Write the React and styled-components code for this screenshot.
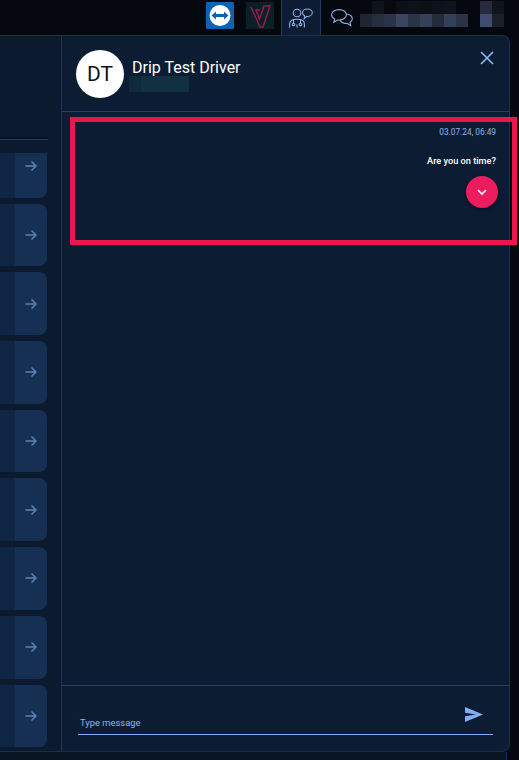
import React from "react";
import styled, { createGlobalStyle } from "styled-components";

const ROW_COUNT = 9;
const NAME_TOP = ["#05080f", "#0f131b", "#07090f", "#0c0f16", "#0e1119", "#0c0f16", "#0e1119", "#10141c", "#05080f"];
const NAME_BOTTOM = ["#1f2532", "#262e3d", "#2b3446", "#3a4660", "#2b3446", "#344059", "#242b3a", "#34405a", "#2b3344"];
const USER_CELLS = ["#252b3a", "#10141c", "#3f4e6e", "#1b1f2a"];

function TeamViewerLogo () {
    return (
        <svg width="28" height="27" viewBox="0 0 28 27">
            <rect width="28" height="27" rx="1" fill="#0e62b4"/>
            <circle cx="14" cy="13.5" r="10.5" fill="#fff"/>
            <path d="M5.5 13.5 10 9.6v2.500h8V9.600l4.500 3.900-4.500 3.900v-2.500h-8v2.500z" fill="#0e62b4"/>
        </svg>
    );
};

function VLogo () {
    return (
        <svg width="28" height="27" viewBox="0 0 28 27">
            <rect width="28" height="27" fill="#0b1f27"/>
            <path d="M5 5 14 25h3L24 4h-6l-4.500 13L10 8h4" fill="none" stroke="#a01a4a" strokeWidth="1.400"/>
        </svg>
    );
};

function TeamIcon () {
    return (
        <svg width="24" height="20" viewBox="0 0 24 20" fill="none" stroke="#8fb2e8" strokeWidth="1.100">
            <circle cx="8" cy="5" r="3.800"/>
            <path d="M.6 19.500v-3.500c0-3 3-4.800 7.400-4.800s7.400 1.800 7.400 4.800v3.500"/>
            <path d="M4.500 11.700v3.300M11.500 11.700v3.300M8 19.500v-3"/>
            <circle cx="4.500" cy="16.500" r="1.300"/>
            <circle cx="11.500" cy="16.500" r="1.300"/>
            <path d="M18.300 1c2.700 0 5 1.600 5 3.700s-2.300 3.800-5 3.800h-.8l-2.300 2 .4-2.700c-1.300-.7-2.100-1.800-2.100-3.100 0-2.100 2.200-3.700 4.800-3.700z"/>
        </svg>
    );
};

function ChatIcon () {
    return (
        <svg width="22" height="18" viewBox="0 0 22 18" fill="none" stroke="#8fb2e8" strokeWidth="1.100">
            <path d="M8 .6c4 0 7.400 2.200 7.400 5.200S12 11 8 11H6.500l-3.700 2.300.9-3.200C1.800 9.100.6 7.500.6 5.800.6 2.800 4 .6 8 .6z"/>
            <path d="M15.300 5c3.300.4 6 2.300 6 4.800 0 1.500-1 2.800-2.300 3.600l.7 3.300-3.700-2.300c-3.200.2-6-.9-7.200-3.300"/>
        </svg>
    );
};

function Arrow () {
    return (
        <svg width="12" height="12" viewBox="0 0 12 12" fill="none" stroke="#5f80b5" strokeWidth="1.500">
            <path d="M.5 6h10M6.500 1.500 11 6l-4.500 4.500"/>
        </svg>
    );
};

function App () {
    const rows = Array.from({ length: ROW_COUNT }, (_, i) => i);
    return (
        <Page>
            <GlobalStyle/>
            <TopBar>
                <LogoSlot><TeamViewerLogo/></LogoSlot>
                <LogoSlot><VLogo/></LogoSlot>
                <TeamTab><TeamIcon/></TeamTab>
                <ChatSlot><ChatIcon/></ChatSlot>
                <Mosaic $cols={9}>
                    {NAME_TOP.concat(NAME_BOTTOM).map((shade, i) => <Cell key={i} $shade={shade}/>)}
                </Mosaic>
                <UserMosaic $cols={2}>
                    {USER_CELLS.map((shade, i) => <Cell key={i} $shade={shade}/>)}
                </UserMosaic>
            </TopBar>

            <Panel>
                <ListColumn>
                    <ListHead/>
                    <RowsClip>
                        <Rows>
                            {rows.map((i) => (
                                <Row key={i}>
                                    <RowAction><Arrow/></RowAction>
                                </Row>
                            ))}
                        </Rows>
                    </RowsClip>
                </ListColumn>

                <ChatColumn>
                    <ChatHeader>
                        <Avatar>DT</Avatar>
                        <DriverInfo>
                            <DriverName>Drip Test Driver</DriverName>
                            <DriverSub/>
                        </DriverInfo>
                        <CloseButton>
                            <svg width="14" height="14" viewBox="0 0 14 14" stroke="#8fb8f5" strokeWidth="1.600" fill="none">
                                <path d="M1 1l12 12M13 1 1 13"/>
                            </svg>
                        </CloseButton>
                    </ChatHeader>

                    <Messages>
                        <Highlight>
                            <Stamp>03.07.24, 06:49</Stamp>
                            <MessageText>Are you on time?</MessageText>
                            <ScrollButton>
                                <svg width="10" height="7" viewBox="0 0 10 7" stroke="#fff" strokeWidth="1.600" fill="none">
                                    <path d="M1 1l4 4 4-4"/>
                                </svg>
                            </ScrollButton>
                        </Highlight>
                    </Messages>

                    <Composer>
                        <InputLine>
                            <Placeholder>Type message</Placeholder>
                            <SendIcon width="18" height="15" viewBox="0 0 18 15" fill="#84adf2">
                                <path d="M0 0l18 7.500L0 15V9.200l11-1.700L0 5.800z"/>
                            </SendIcon>
                        </InputLine>
                    </Composer>
                </ChatColumn>
            </Panel>
            <BottomStrip/>
        </Page>
    );
};

const GlobalStyle = createGlobalStyle`
    html, body {
        margin: 0;
        padding: 0;
        background: #05080f;
    }
    * {
        box-sizing: border-box;
    }
`

const Page = styled.div`
    width: 519px;
    height: 760px;
    overflow: hidden;
    background: #05080f;
    font-family: "Roboto", "Liberation Sans", sans-serif;
`

const TopBar = styled.div`
    display: flex;
    align-items: stretch;
    height: 35px;
    padding-left: 206px;
`

const LogoSlot = styled.div`
    width: 40px;
    padding-top: 2px;

    & + & {
        width: 35px;
    }
`

const TeamTab = styled.div`
    display: flex;
    align-items: center;
    justify-content: center;
    width: 40px;
    background: #0c1d33;
    border-left: 1px solid #1c3a63;
    border-right: 1px solid #1c3a63;
`

const ChatSlot = styled.div`
    display: flex;
    align-items: center;
    width: 39px;
    padding-left: 10px;
`

const Mosaic = styled.div`
    display: grid;
    grid-template-columns: repeat(${({ $cols }) => $cols}, 12px);
    grid-auto-rows: 13px;
    align-content: start;
    padding-top: 1px;
`

const UserMosaic = styled(Mosaic)`
    margin-left: 12px;
`

const Cell = styled.div`
    background: ${({ $shade }) => $shade};
`

const Panel = styled.div`
    display: flex;
    width: 510px;
    height: 717px;
    background: #0c1d33;
    border: 1px solid #14305a;
    border-left: 0;
    border-radius: 0 8px 8px 0;
`

const ListColumn = styled.div`
    display: flex;
    flex-direction: column;
    width: 61px;
    flex-shrink: 0;
    background: #0b1a2e;
`

const ListHead = styled.div`
    flex-shrink: 0;
    height: 104px;
    width: 48px;
    border-bottom: 1px solid #1f3b5f;
    box-shadow: inset 0 -2px 0 #07101d;
`

const RowsClip = styled.div`
    flex: 1;
    margin-top: 13px;
    overflow: hidden;
`

const Rows = styled.div`
    display: flex;
    flex-direction: column;
    gap: 6px;
    width: 47px;
    margin-top: -18px;
`

const Row = styled.div`
    display: flex;
    justify-content: flex-end;
    flex-shrink: 0;
    height: 62.7px;
    background: #0f2745;
    border-radius: 0 8px 8px 0;
`

const RowAction = styled.div`
    display: flex;
    align-items: center;
    justify-content: center;
    width: 32px;
    background: #153052;
    border-radius: 0 8px 8px 0;
`

const ChatColumn = styled.div`
    flex: 1;
    min-width: 0;
    display: flex;
    flex-direction: column;
    border-left: 1px solid #1c3557;
`

const ChatHeader = styled.div`
    position: relative;
    display: flex;
    flex-shrink: 0;
    height: 76px;
    padding: 14px 14px 0 14px;
    border-bottom: 1px solid #26405f;
`

const Avatar = styled.div`
    display: flex;
    align-items: center;
    justify-content: center;
    width: 48px;
    height: 48px;
    border-radius: 50%;
    background: #fff;
    color: #111;
    font-size: 21px;
`

const DriverInfo = styled.div`
    margin-left: 8px;
`

const DriverName = styled.div`
    margin-top: 8px;
    color: #fff;
    font-size: 16px;
    line-height: 20px;
`

const DriverSub = styled.div`
    width: 60px;
    height: 16px;
    margin-top: -2px;
    margin-left: -3px;
    background: linear-gradient(90deg, #102a3d 20%, #12303f 20%);
`

const CloseButton = styled.div`
    position: absolute;
    top: 14px;
    right: 15px;
`

const Messages = styled.div`
    flex: 1;
    padding: 5px 0 0 8px;
`

const Highlight = styled.div`
    display: flex;
    flex-direction: column;
    align-items: flex-end;
    width: 447px;
    height: 128px;
    padding: 5px 16px 0 0;
    border: 5px solid #e8184f;
`

const Stamp = styled.div`
    color: #8fb4f0;
    font-size: 8.3px;
    line-height: 10px;
`

const MessageText = styled.div`
    margin-top: 18px;
    color: #fff;
    font-size: 9.2px;
    font-weight: 500;
    line-height: 11px;
`

const ScrollButton = styled.div`
    display: flex;
    align-items: center;
    justify-content: center;
    width: 32px;
    height: 32px;
    margin: 10px -2px 0 0;
    border-radius: 50%;
    background: #ec1c5f;
    box-shadow: 0 2px 5px rgba(0, 0, 0, 0.4);
`

const Composer = styled.div`
    flex-shrink: 0;
    height: 66px;
    padding: 0 16px;
    border-top: 1px solid #26405f;
`

const InputLine = styled.div`
    display: flex;
    align-items: flex-end;
    justify-content: space-between;
    height: 49px;
    padding: 0 10px 6px 2px;
    border-bottom: 1px solid #84adf2;
`

const Placeholder = styled.span`
    color: #8fb4f0;
    font-size: 9.4px;
    line-height: 11px;
`

const SendIcon = styled.svg`
    align-self: flex-start;
    margin-top: 21px;
`

const BottomStrip = styled.div`
    width: 507px;
    height: 8px;
    background: #0a1524;
    border-right: 1px solid #14305a;
`

export default App;
